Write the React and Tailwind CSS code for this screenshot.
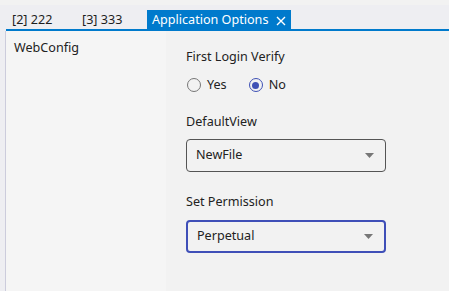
import React from "react";

const font = { fontFamily: '"Noto Sans", "Liberation Sans", sans-serif' };

const Radio = ({ checked, label }) => (
  <label className="flex items-center gap-[6px]">
    <span
      className={`flex h-[14px] w-[14px] items-center justify-center rounded-full border-[1.5px] ${
        checked ? "border-[#3f51b5]" : "border-[#777]"
      }`}
    >
      {checked && <span className="h-[7px] w-[7px] rounded-full bg-[#3f51b5]" />}
    </span>
    <span className="text-[12.6px] text-[#222]">{label}</span>
  </label>
);

const Select = ({ value, focused }) => (
  <div
    className={`flex h-[33px] w-[200px] items-center justify-between rounded-[4px] pl-[9px] pr-[11px] ${
      focused ? "border-2 border-[#3f4fb8]" : "border border-[#555]"
    }`}
  >
    <span className="text-[12.6px] text-[#222]">{value}</span>
    <svg width="9" height="5" viewBox="0 0 9 5">
      <path d="M0 0h9L4.5 5z" fill="#777" />
    </svg>
  </div>
);

export default function App() {
  return (
    <div className="flex h-[291px] w-[449px] flex-col bg-[#eeeef2]" style={font}>
      <div className="h-[5px] bg-[#f2f2f2]" />
      {/* tab strip */}
      <div className="ml-[6px] flex h-[26px] items-end border-b-2 border-[#007acc]">
        <div className="flex h-[19px] w-[70px] items-center pl-[6px] pt-[2px] text-[12.6px] text-[#1e1e1e]">[2] 222</div>
        <div className="flex h-[19px] w-[71px] items-center pl-[6px] pt-[2px] text-[12.6px] text-[#1e1e1e]">[3] 333</div>
        <div className="flex h-[19px] w-[144px] items-center justify-between bg-[#007acc] pl-[5px] pr-[5px] pt-[2px] text-[12.6px] text-white">
          <span>Application Options</span>
          <svg width="10" height="10" viewBox="0 0 10 10">
            <path d="M1 1l8 8M9 1l-8 8" stroke="#fff" strokeWidth="1.4" />
          </svg>
        </div>
      </div>
      <div className="flex flex-1">
        <div className="w-[5px]" />
        <div className="w-[161px] border-l border-[#ccccdc] bg-[#f5f5f5] px-[8px] pt-[8px] text-[12.6px] text-[#222]">
          WebConfig
        </div>
        <div className="flex-1 bg-[#f2f2f2] pl-[20px] pt-[17px]">
          <div className="text-[12.6px] text-[#222]">First Login Verify</div>
          <div className="mt-[9px] flex gap-[22px] pl-[1px]">
            <Radio label="Yes" />
            <Radio label="No" checked />
          </div>
          <div className="mt-[18px] text-[12.6px] text-[#222]">DefaultView</div>
          <div className="mt-[7px]">
            <Select value="NewFile" />
          </div>
          <div className="mt-[21px] text-[12.6px] text-[#222]">Set Permission</div>
          <div className="mt-[8px]">
            <Select value="Perpetual" focused />
          </div>
        </div>
      </div>
    </div>
  );
}
